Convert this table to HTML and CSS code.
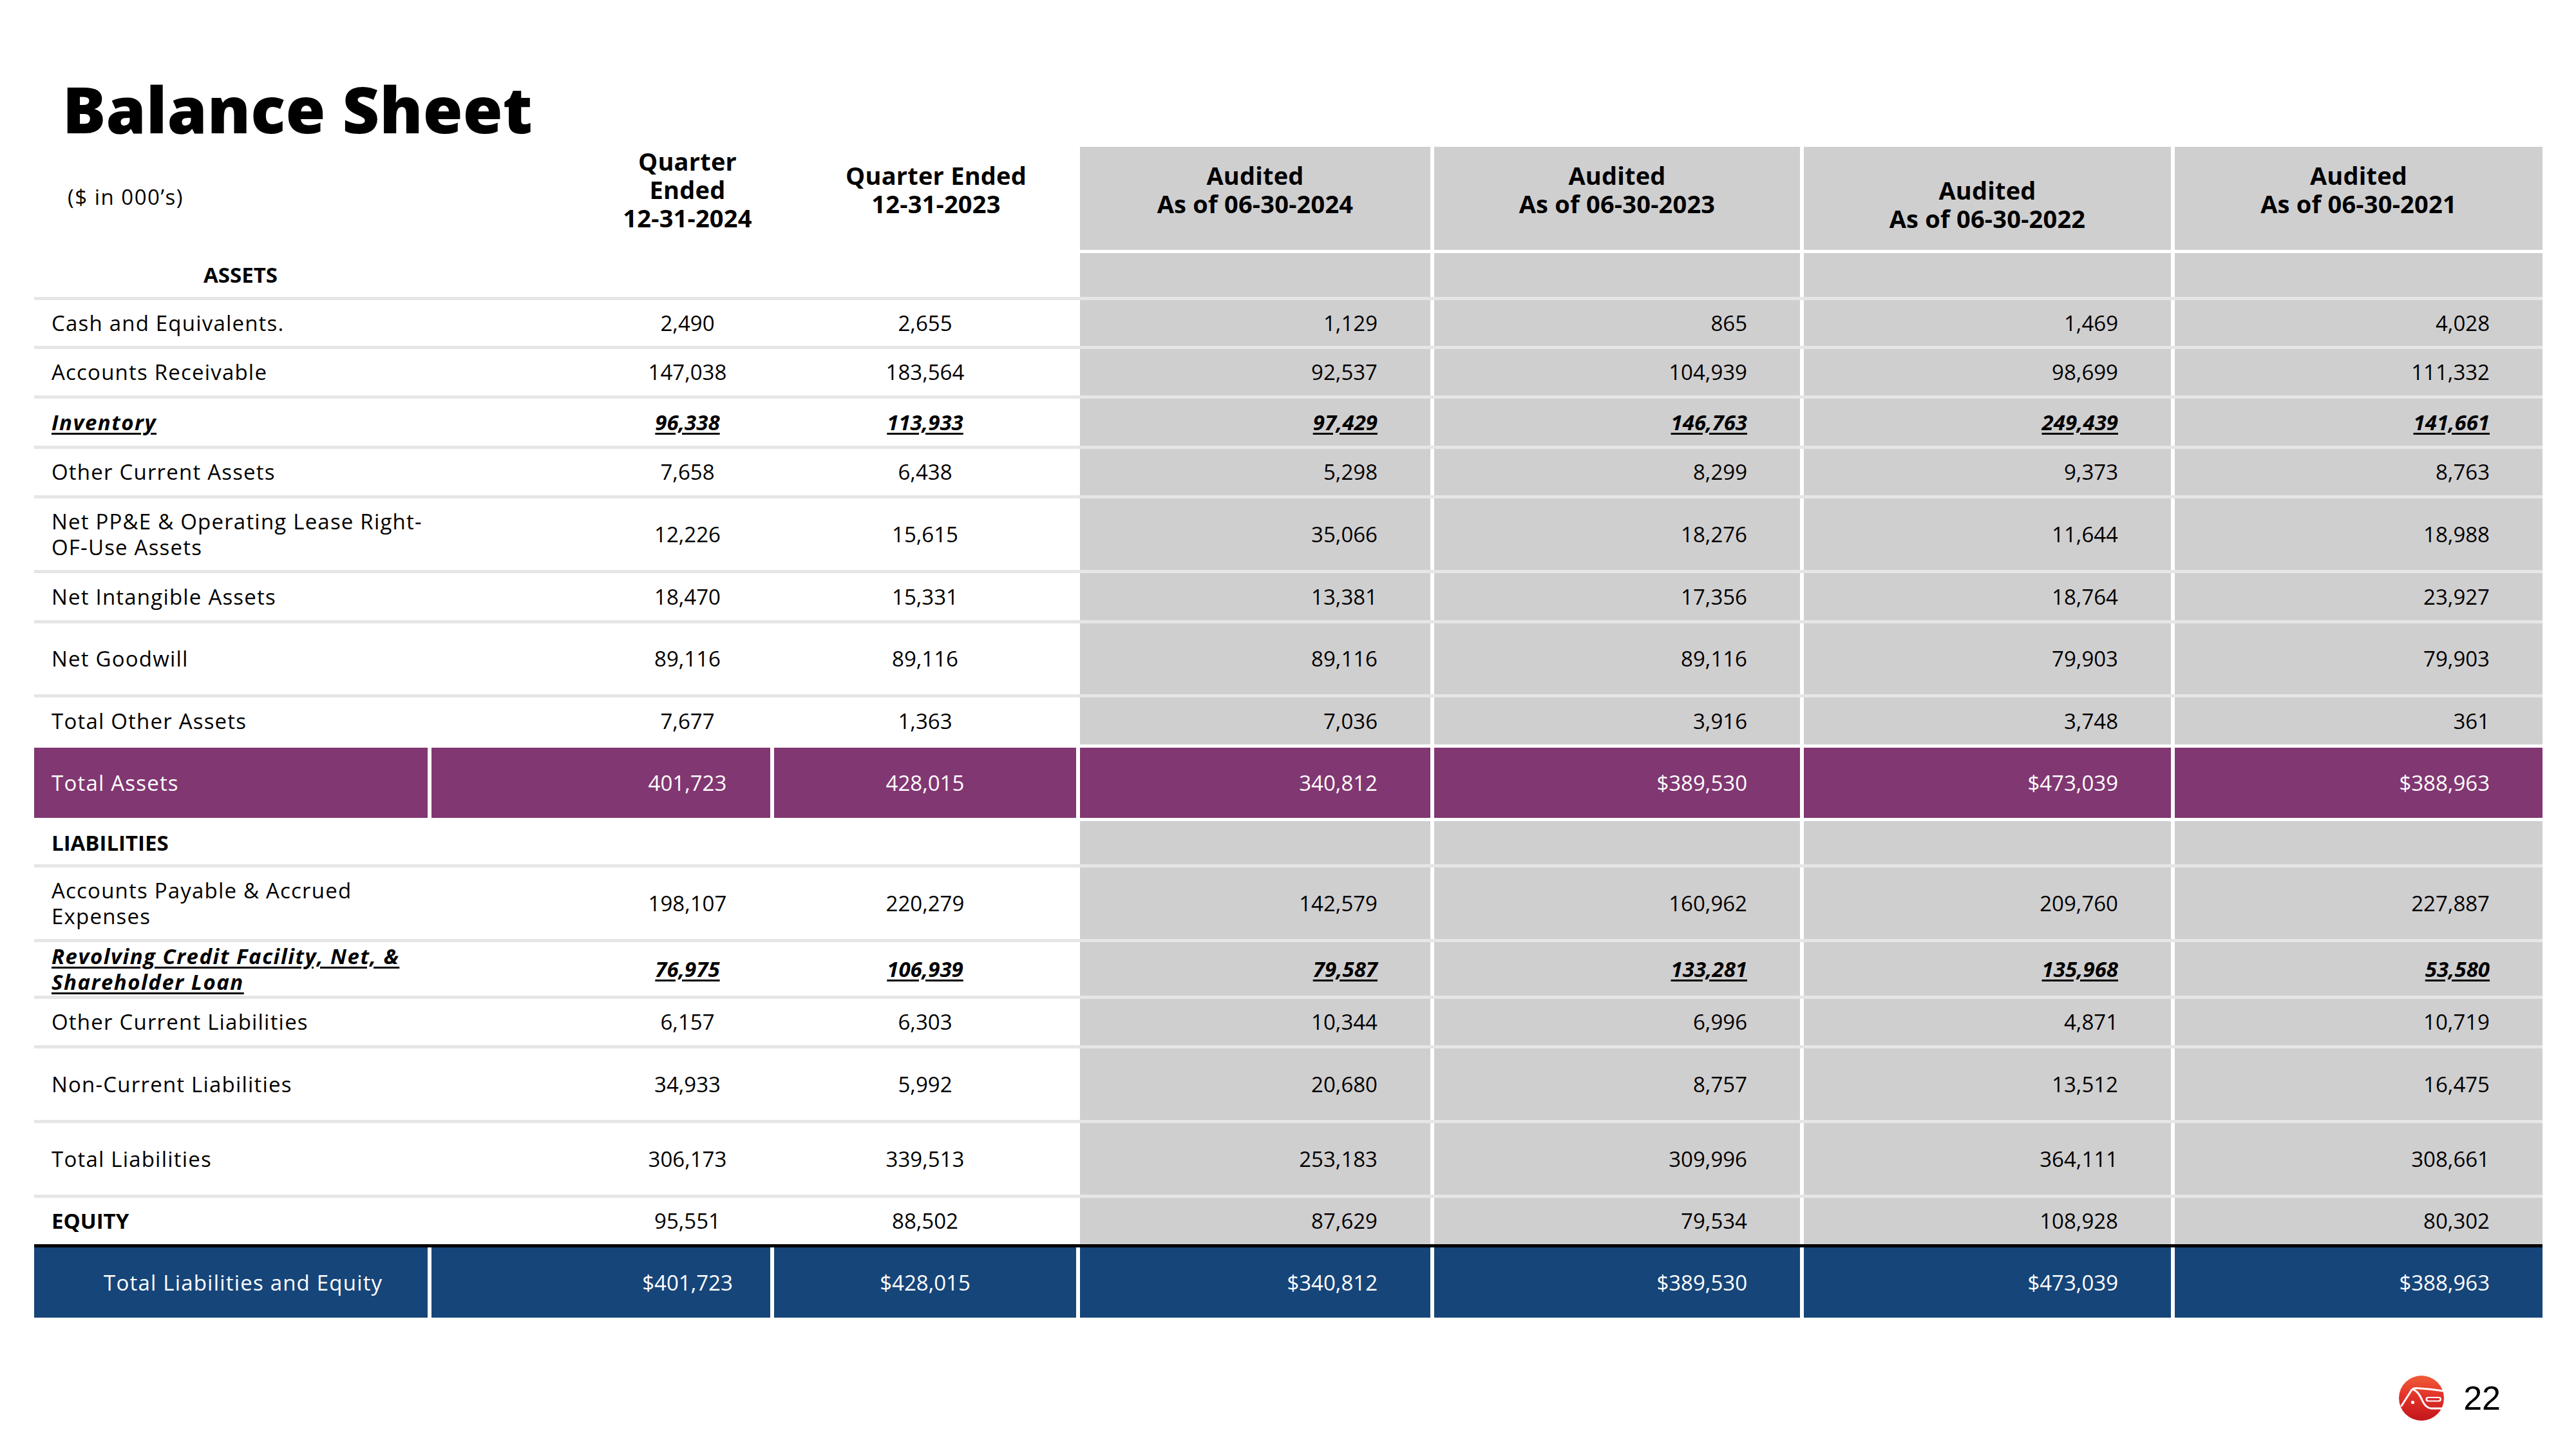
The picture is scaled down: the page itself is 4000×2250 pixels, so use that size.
FILE: index.html
```html
<!DOCTYPE html>
<html lang="en">
<head>
<meta charset="utf-8">
<title>Balance Sheet</title>
<link rel="stylesheet" href="styles.css">
</head>
<body>
<div class="slide">
  <h1 class="title">Balance Sheet</h1>

  <div class="table">
    <div class="row head">
      <div class="cell lab unit">($ in 000’s)</div>
      <div class="cell q1 hq">Quarter<br>Ended<br>12-31-2024</div>
      <div class="cell q2 hq">Quarter Ended<br>12-31-2023</div>
      <div class="cell au ha">Audited<br>As of 06-30-2024</div>
      <div class="cell au ha">Audited<br>As of 06-30-2023</div>
      <div class="cell au ha low">Audited<br>As of 06-30-2022</div>
      <div class="cell au ha">Audited<br>As of 06-30-2021</div>
    </div>

    <div class="row sep-white h68">
      <div class="cell lab sect center">ASSETS</div>
      <div class="cell q1"></div><div class="cell q2"></div>
      <div class="cell au"></div><div class="cell au"></div><div class="cell au"></div><div class="cell au"></div>
    </div>

    <div class="row h71">
      <div class="cell lab">Cash and Equivalents.</div>
      <div class="cell q1">2,490</div><div class="cell q2">2,655</div>
      <div class="cell au">1,129</div><div class="cell au">865</div><div class="cell au">1,469</div><div class="cell au">4,028</div>
    </div>

    <div class="row h72">
      <div class="cell lab">Accounts Receivable</div>
      <div class="cell q1">147,038</div><div class="cell q2">183,564</div>
      <div class="cell au">92,537</div><div class="cell au">104,939</div><div class="cell au">98,699</div><div class="cell au">111,332</div>
    </div>

    <div class="row h73 em">
      <div class="cell lab"><u>Inventory</u></div>
      <div class="cell q1"><u>96,338</u></div><div class="cell q2"><u>113,933</u></div>
      <div class="cell au"><u>97,429</u></div><div class="cell au"><u>146,763</u></div><div class="cell au"><u>249,439</u></div><div class="cell au"><u>141,661</u></div>
    </div>

    <div class="row h72">
      <div class="cell lab">Other Current Assets</div>
      <div class="cell q1">7,658</div><div class="cell q2">6,438</div>
      <div class="cell au">5,298</div><div class="cell au">8,299</div><div class="cell au">9,373</div><div class="cell au">8,763</div>
    </div>

    <div class="row h111">
      <div class="cell lab">Net PP&amp;E &amp; Operating Lease Right-<br>OF-Use Assets</div>
      <div class="cell q1">12,226</div><div class="cell q2">15,615</div>
      <div class="cell au">35,066</div><div class="cell au">18,276</div><div class="cell au">11,644</div><div class="cell au">18,988</div>
    </div>

    <div class="row h73">
      <div class="cell lab">Net Intangible Assets</div>
      <div class="cell q1">18,470</div><div class="cell q2">15,331</div>
      <div class="cell au">13,381</div><div class="cell au">17,356</div><div class="cell au">18,764</div><div class="cell au">23,927</div>
    </div>

    <div class="row h110">
      <div class="cell lab">Net Goodwill</div>
      <div class="cell q1">89,116</div><div class="cell q2">89,116</div>
      <div class="cell au">89,116</div><div class="cell au">89,116</div><div class="cell au">79,903</div><div class="cell au">79,903</div>
    </div>

    <div class="row h73">
      <div class="cell lab">Total Other Assets</div>
      <div class="cell q1">7,677</div><div class="cell q2">1,363</div>
      <div class="cell au">7,036</div><div class="cell au">3,916</div><div class="cell au">3,748</div><div class="cell au">361</div>
    </div>

    <div class="row sep-white h109 purple">
      <div class="cell lab">Total Assets</div>
      <div class="cell q1">401,723</div><div class="cell q2">428,015</div>
      <div class="cell au">340,812</div><div class="cell au">$389,530</div><div class="cell au">$473,039</div><div class="cell au">$388,963</div>
    </div>

    <div class="row sep-white h67">
      <div class="cell lab sect">LIABILITIES</div>
      <div class="cell q1"></div><div class="cell q2"></div>
      <div class="cell au"></div><div class="cell au"></div><div class="cell au"></div><div class="cell au"></div>
    </div>

    <div class="row h111">
      <div class="cell lab">Accounts Payable &amp; Accrued<br>Expenses</div>
      <div class="cell q1">198,107</div><div class="cell q2">220,279</div>
      <div class="cell au">142,579</div><div class="cell au">160,962</div><div class="cell au">209,760</div><div class="cell au">227,887</div>
    </div>

    <div class="row h83 em">
      <div class="cell lab"><u>Revolving Credit Facility, Net, &amp;<br>Shareholder Loan</u></div>
      <div class="cell q1"><u>76,975</u></div><div class="cell q2"><u>106,939</u></div>
      <div class="cell au"><u>79,587</u></div><div class="cell au"><u>133,281</u></div><div class="cell au"><u>135,968</u></div><div class="cell au"><u>53,580</u></div>
    </div>

    <div class="row h72">
      <div class="cell lab">Other Current Liabilities</div>
      <div class="cell q1">6,157</div><div class="cell q2">6,303</div>
      <div class="cell au">10,344</div><div class="cell au">6,996</div><div class="cell au">4,871</div><div class="cell au">10,719</div>
    </div>

    <div class="row h111">
      <div class="cell lab">Non-Current Liabilities</div>
      <div class="cell q1">34,933</div><div class="cell q2">5,992</div>
      <div class="cell au">20,680</div><div class="cell au">8,757</div><div class="cell au">13,512</div><div class="cell au">16,475</div>
    </div>

    <div class="row h111">
      <div class="cell lab">Total Liabilities</div>
      <div class="cell q1">306,173</div><div class="cell q2">339,513</div>
      <div class="cell au">253,183</div><div class="cell au">309,996</div><div class="cell au">364,111</div><div class="cell au">308,661</div>
    </div>

    <div class="row h72">
      <div class="cell lab sect">EQUITY</div>
      <div class="cell q1">95,551</div><div class="cell q2">88,502</div>
      <div class="cell au">87,629</div><div class="cell au">79,534</div><div class="cell au">108,928</div><div class="cell au">80,302</div>
    </div>

    <div class="row sep-black h109 blue">
      <div class="cell lab indent">Total Liabilities and Equity</div>
      <div class="cell q1">$401,723</div><div class="cell q2">$428,015</div>
      <div class="cell au">$340,812</div><div class="cell au">$389,530</div><div class="cell au">$473,039</div><div class="cell au">$388,963</div>
    </div>
  </div>

  <footer class="footer">
    <svg class="logo" viewBox="0 0 70 70" width="70" height="70" aria-label="logo">
      <defs>
        <linearGradient id="lg" x1="0" y1="0" x2="0" y2="1">
          <stop offset="0" stop-color="#f05c38"/>
          <stop offset="0.45" stop-color="#e2332a"/>
          <stop offset="1" stop-color="#c3161c"/>
        </linearGradient>
      </defs>
      <circle cx="35" cy="35" r="35" fill="url(#lg)"/>
      <path d="M4 47 L20 22 Q23 19 28 19.5 Q50 21 70 24" fill="none" stroke="#fff" stroke-width="3" stroke-linejoin="round" stroke-linecap="round"/>
      <path d="M21 21 Q30 24 36 38 Q41 50 50 51 L69 51" fill="none" stroke="#fff" stroke-width="3"/>
      <rect x="41.5" y="33" width="24.5" height="7.5" rx="3.75" fill="#fff"/>
      <rect x="44" y="35" width="19.5" height="3.5" rx="1.75" fill="#d9282a"/>
      <circle cx="21.5" cy="41.5" r="2.6" fill="#fff"/>
    </svg>
    <span class="page">22</span>
  </footer>
</div>
</body>
</html>
```

FILE: styles.css
```css
html, body {
  margin: 0;
  padding: 0;
  background: #ffffff;
}

.slide {
  width: 4000px;
  height: 2250px;
  overflow: hidden;
  box-sizing: border-box;
  padding-top: 118px;
  font-family: "Open Sans", "DejaVu Sans", sans-serif;
  color: #000;
  display: flex;
  flex-direction: column;
}

.title {
  margin: 0 0 10px 97px;
  font-family: "Open Sans", sans-serif;
  font-weight: 800;
  font-size: 100px;
  line-height: 100px;
  letter-spacing: 0.2px;
}

.table {
  margin-left: 53px;
  width: 3895px;
  display: flex;
  flex-direction: column;
}

.row {
  display: grid;
  grid-template-columns: 611px 526px 469px 544px 568px 570px 571px;
  column-gap: 6px;
  background: #fff;
  font-size: 33px;
  line-height: 40px;
}

.row + .row {
  border-top: 5px solid #e6e6e6;
}

.row.sep-white { border-top-color: #ffffff; }
.row.sep-black { border-top-color: #000000; }

.head { height: 160px; }
.h67 { height: 67px; }
.h68 { height: 68px; }
.h71 { height: 71px; }
.h72 { height: 72px; }
.h73 { height: 73px; }
.h83 { height: 83px; }
.h109 { height: 109px; }
.h110 { height: 110px; }
.h111 { height: 111px; }

.cell {
  display: flex;
  align-items: center;
  box-sizing: border-box;
  min-width: 0;
  white-space: nowrap;
}

.lab {
  padding-left: 27px;
  letter-spacing: 1.2px;
}

.q1 {
  justify-content: center;
  text-align: center;
  padding-left: 269px;
}

.q2 {
  justify-content: center;
  text-align: center;
}

.au {
  background: #d0cfd0;
  justify-content: flex-end;
  padding-right: 82px;
}

/* header */
.head .cell {
  font-weight: 700;
  font-size: 38px;
  line-height: 44px;
  text-align: center;
  padding-bottom: 54px;
  letter-spacing: 0.2px;
}

.head .unit {
  font-weight: 400;
  font-size: 33px;
  padding-left: 52px;
  padding-bottom: 30px;
  letter-spacing: 1.5px;
}

.head .hq.q2 {
  padding-left: 34px;
}

.head .ha {
  justify-content: center;
  padding-right: 0;
}

.head .ha.low {
  padding-bottom: 8px;
  padding-top: 0;
}

.sect {
  font-weight: 700;
  letter-spacing: 0;
}

.sect.center {
  justify-content: center;
  padding-left: 30px;
}

.em {
  font-weight: 700;
  font-style: italic;
}

.em .lab {
  letter-spacing: 1.5px;
}

.em u {
  text-decoration-thickness: 3px;
  text-underline-offset: 4px;
}

.purple .cell {
  background: #813771;
  color: #fff;
}

.blue .cell {
  background: #164579;
  color: #fff;
}

.indent {
  padding-left: 108px;
}

.footer {
  margin-top: 90px;
  display: flex;
  justify-content: flex-end;
  align-items: center;
  gap: 30px;
  padding-right: 117px;
}

.logo {
  display: block;
  width: 70px;
  height: 70px;
}

.page {
  font-family: "Liberation Sans", Arial, sans-serif;
  font-size: 52px;
  line-height: 70px;
}
```
